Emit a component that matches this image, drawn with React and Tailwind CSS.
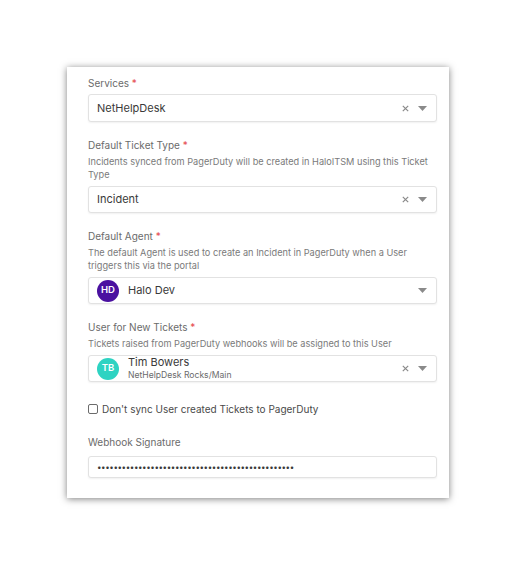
import React from "react";

const font = { fontFamily: 'Inter, "Open Sans", sans-serif' };

function Caret() {
  return (
    <svg width="9" height="5" viewBox="0 0 9 5" className="shrink-0">
      <path d="M0 0 L9 0 L4.5 5 Z" fill="#8a8a8a" />
    </svg>
  );
}

function Cross() {
  return (
    <svg width="7" height="7" viewBox="0 0 7 7" className="shrink-0">
      <path d="M0.8 0.8 L6.2 6.2 M6.2 0.8 L0.8 6.2" stroke="#8a8a8a" strokeWidth="1.2" />
    </svg>
  );
}

function Label({ children, required }) {
  return (
    <div className="h-[14px] text-[10px] leading-[14px] text-[#6b6b6b]">
      {children}
      {required && <span className="text-[#e5484d]"> *</span>}
    </div>
  );
}

function Desc({ children }) {
  return (
    <div className="text-[9.2px] leading-[13px] text-[#7a7a7a]">{children}</div>
  );
}

function Select({ children, clear = true, h = "h-[28px]" }) {
  return (
    <div className={`flex ${h} items-center rounded-[3px] border border-[#e2e2e2] bg-white pl-[8px] pr-[9px] shadow-[0_1px_2px_rgba(0,0,0,0.06)]`}>
      <div className="flex min-w-0 flex-1 items-center">{children}</div>
      <div className="flex items-center gap-[9px]">
        {clear && <Cross />}
        <Caret />
      </div>
    </div>
  );
}

export default function App() {
  return (
    <div className="min-h-[568px] w-[517px] bg-white pl-[67px] pt-[67px]" style={font}>
      <div className="w-[382px] bg-white pb-[20px] pl-[21px] pr-[12px] pt-[9px] shadow-[0_1px_7px_rgba(0,0,0,0.5)]">
        <Label required>Services</Label>
        <div className="mt-[4px]">
          <Select>
            <span className="text-[11px] text-[#3a3a3a]">NetHelpDesk</span>
          </Select>
        </div>

        <div className="mt-[16px]">
          <Label required>Default Ticket Type</Label>
        </div>
        <div className="mt-[3px]">
          <Desc>
            Incidents synced from PagerDuty will be created in HaloITSM using this Ticket Type
          </Desc>
        </div>
        <div className="mt-[5px]">
          <Select h="h-[27px]">
            <span className="text-[11px] text-[#3a3a3a]">Incident</span>
          </Select>
        </div>

        <div className="mt-[16px]">
          <Label required>Default Agent</Label>
        </div>
        <div className="mt-[3px]">
          <Desc>
            The default Agent is used to create an Incident in PagerDuty when a User triggers this via the portal
          </Desc>
        </div>
        <div className="mt-[5px]">
          <Select clear={false} h="h-[27px]">
            <div className="flex h-[22px] w-[22px] shrink-0 items-center justify-center rounded-full bg-[#4a11a0] text-[9.5px] font-semibold text-white">
              HD
            </div>
            <span className="ml-[9px] text-[11px] text-[#3a3a3a]">Halo Dev</span>
          </Select>
        </div>

        <div className="mt-[16px]">
          <Label required>User for New Tickets</Label>
        </div>
        <div className="mt-[3px]">
          <Desc>Tickets raised from PagerDuty webhooks will be assigned to this User</Desc>
        </div>
        <div className="mt-[5px]">
          <Select h="h-[27px]">
            <div className="flex h-[22px] w-[22px] shrink-0 items-center justify-center rounded-full bg-[#2ed3c2] text-[9.5px] font-semibold text-white">
              TB
            </div>
            <div className="ml-[9px] flex flex-col">
              <span className="text-[11px] leading-[13px] text-[#3a3a3a]">Tim Bowers</span>
              <span className="text-[8.6px] leading-[12px] text-[#6b6b6b]">NetHelpDesk Rocks/Main</span>
            </div>
          </Select>
        </div>

        <div className="mt-[19px] flex h-[16px] items-center">
          <div className="h-[10px] w-[10px] rounded-[2px] border border-[#6b6b6b] bg-white" />
          <span className="ml-[4px] text-[10px] text-[#4a4a4a]">Don't sync User created Tickets to PagerDuty</span>
        </div>

        <div className="mt-[18px]">
          <Label>Webhook Signature</Label>
        </div>
        <div className="mt-[7px] flex h-[22px] items-center rounded-[3px] border border-[#e2e2e2] bg-white pl-[8px] shadow-[0_1px_2px_rgba(0,0,0,0.06)]">
          <span className="text-[8px] tracking-[-0.4px] text-[#3a3a3a]">
            {"••••••••••••••••••••••••••••••••••••••••••••••••"}
          </span>
        </div>
      </div>
    </div>
  );
}
